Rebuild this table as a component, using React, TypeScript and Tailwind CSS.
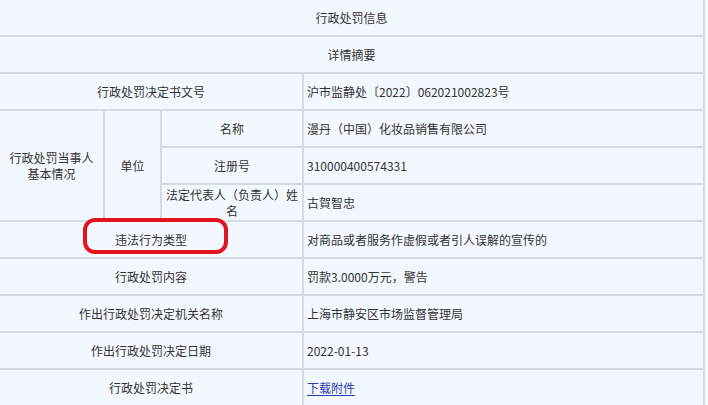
const cell =
  "border-r-2 border-b-2 border-[#d3dce3] h-[37px] text-center align-middle leading-[16px] px-1";
const val =
  "border-r-2 border-b-2 border-[#d3dce3] h-[37px] text-left align-middle leading-[16px] pl-[3px] pr-1";

type Row = { label: string; value: React.ReactNode };

const rows: Row[] = [
  { label: "违法行为类型", value: "对商品或者服务作虚假或者引人误解的宣传的" },
  { label: "行政处罚内容", value: "罚款3.0000万元，警告" },
  { label: "作出行政处罚决定机关名称", value: "上海市静安区市场监督管理局" },
  { label: "作出行政处罚决定日期", value: "2022-01-13" },
  {
    label: "行政处罚决定书",
    value: (
      <a href="#" className="text-[#2b3fae] underline underline-offset-2">
        下载附件
      </a>
    ),
  },
];

export default function App() {
  return (
    <div
      className="relative w-[708px] h-[405px] overflow-hidden bg-[#f7fafd] text-[12px] text-[#333]"
      style={{ fontFamily: '"Noto Sans CJK SC", "Noto Sans", sans-serif' }}
    >
      <table className="w-[705px] border-separate border-spacing-0 table-fixed bg-[#f3f8fe]">
        <colgroup>
          <col className="w-[105px]" />
          <col className="w-[57px]" />
          <col className="w-[142px]" />
          <col className="w-[401px]" />
        </colgroup>
        <tbody>
          <tr>
            <td colSpan={4} className={`${cell} h-[36px]`}>
              行政处罚信息
            </td>
          </tr>
          <tr>
            <td colSpan={4} className={cell}>
              详情摘要
            </td>
          </tr>
          <tr>
            <td colSpan={3} className={cell}>
              行政处罚决定书文号
            </td>
            <td className={val}>沪市监静处〔2022〕062021002823号</td>
          </tr>
          <tr>
            <td rowSpan={3} className={cell}>
              行政处罚当事人
              <br />
              基本情况
            </td>
            <td rowSpan={3} className={cell}>
              单位
            </td>
            <td className={cell}>名称</td>
            <td className={val}>漫丹（中国）化妆品销售有限公司</td>
          </tr>
          <tr>
            <td className={cell}>注册号</td>
            <td className={val}>310000400574331</td>
          </tr>
          <tr>
            <td className={cell}>
              法定代表人（负责人）姓
              <br />名
            </td>
            <td className={val}>古賀智忠</td>
          </tr>
          {rows.map((r) => (
            <tr key={r.label}>
              <td colSpan={3} className={cell}>
                {r.label}
              </td>
              <td className={val}>{r.value}</td>
            </tr>
          ))}
        </tbody>
      </table>
      <div className="absolute left-[83px] top-[218px] w-[145px] h-[36px] border-[4px] border-[#e2141e] rounded-[12px]" />
    </div>
  );
}
